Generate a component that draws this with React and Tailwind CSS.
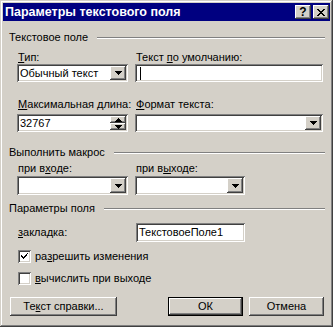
import React from 'react';

const raised =
  'bg-[#d4d0c8] shadow-[inset_-1px_-1px_#404040,inset_1px_1px_#fff,inset_-2px_-2px_#808080,inset_2px_2px_#d4d0c8]';
const sunken =
  'bg-white shadow-[inset_1px_1px_#808080,inset_-1px_-1px_#fff,inset_2px_2px_#404040,inset_-2px_-2px_#d4d0c8]';

const Arrow = ({ up }) => (
  <svg width="7" height="4" viewBox="0 0 7 4" className={up ? 'rotate-180' : ''}>
    <path d="M0 0h7v1H0zM1 1h5v1H1zM2 2h3v1H2zM3 3h1v1H3z" fill="#000" />
  </svg>
);

const GroupHeading = ({ children, className = '' }) => (
  <div className={`flex items-center h-[13px] ${className}`}>
    <span>{children}</span>
    <div className="flex-1 ml-[9px] h-0 border-t border-b border-t-[#808080] border-b-white" />
  </div>
);

const Select = ({ value, className = '' }) => (
  <div className={`${sunken} flex items-stretch p-[2px] ${className}`}>
    <div className="flex-1 pl-[1px] flex items-center overflow-hidden whitespace-nowrap">{value}</div>
    <div className={`${raised} w-[16px] flex items-center justify-center`}>
      <Arrow />
    </div>
  </div>
);

const Checkbox = ({ checked, children, className = '' }) => (
  <div className={`flex items-center h-[13px] pl-[9px] ${className}`}>
    <div className={`${sunken} w-[13px] h-[13px] flex items-center justify-center`}>
      {checked && (
        <svg width="7" height="7" viewBox="0 0 7 7">
          <path d="M6 0h1v1h-1zM5 1h1v2H5zM4 2h1v2H4zM3 3h1v2H3zM2 4h1v2H2zM1 3h1v2H1zM0 2h1v2H0z" fill="#000" />
        </svg>
      )}
    </div>
    <span className="ml-[4px]">{children}</span>
  </div>
);

const Button = ({ children, isDefault, className = '' }) =>
  isDefault ? (
    <div className={`border border-black h-[19px] ${className}`}>
      <div className={`${raised} h-full flex items-center justify-center`}>{children}</div>
    </div>
  ) : (
    <div className={`${raised} h-[19px] flex items-center justify-center ${className}`}>{children}</div>
  );

export default function App() {
  return (
    <div className="w-[333px] h-[327px] p-[3px] flex flex-col bg-[#d4d0c8] shadow-[inset_-1px_-1px_#404040,inset_1px_1px_#d4d0c8,inset_-2px_-2px_#808080,inset_2px_2px_#fff] font-['Liberation_Sans',Arial,sans-serif] text-[11px] leading-[13px] text-black">
      {/* title bar */}
      <div className="h-[18px] bg-[#000080] flex items-center pl-[2px] pr-[1px]">
        <span className="flex-1 text-white font-bold text-[12.5px] whitespace-nowrap">Параметры текстового поля</span>
        <div className={`${raised} w-[16px] h-[14px] flex items-center justify-center font-bold text-[12px] leading-none`}>?</div>
        <div className={`${raised} w-[16px] h-[14px] ml-[2px] flex items-center justify-center`}>
          <svg width="8" height="7" viewBox="0 0 8 7">
            <path d="M0 0h2v1H0zM6 0h2v1H6zM1 1h2v1H1zM5 1h2v1H5zM2 2h4v1H2zM3 3h2v1H3zM2 4h4v1H2zM1 5h2v1H1zM5 5h2v1H5zM0 6h2v1H0zM6 6h2v1H6z" fill="#000" />
          </svg>
        </div>
      </div>

      <div className="pl-[6px] pr-[5px] flex flex-col">
        <GroupHeading className="mt-[10px]">Текстовое поле</GroupHeading>

        <div className="grid grid-cols-[111px_188px] gap-x-[7px] pl-[8px]">
          <div className="mt-[7px] h-[13px] pl-[1px]"><u>Т</u>ип:</div>
          <div className="mt-[7px] h-[13px] pl-[1px]">Текст <u>п</u>о умолчанию:</div>
          <Select value="Обычный текст" className="h-[18px]" />
          <div className={`${sunken} h-[18px] flex items-center pl-[5px]`}>
            <div className="w-[1px] h-[13px] bg-black" />
          </div>

          <div className="mt-[16px] h-[13px] pl-[1px] whitespace-nowrap"><u>М</u>аксимальная длина:</div>
          <div className="mt-[16px] h-[13px] pl-[1px]"><u>Ф</u>ормат текста:</div>
          <div className={`${sunken} mt-[3px] h-[18px] flex items-stretch p-[2px]`}>
            <div className="flex-1 pl-[1px] flex items-center">32767</div>
            <div className="w-[16px] flex flex-col">
              <div className={`${raised} flex-1 flex items-center justify-center`}>
                <Arrow up />
              </div>
              <div className={`${raised} flex-1 flex items-center justify-center`}>
                <Arrow />
              </div>
            </div>
          </div>
          <Select value="" className="mt-[3px] h-[18px]" />
        </div>

        <GroupHeading className="mt-[14px]">Выполнить макрос</GroupHeading>

        <div className="grid grid-cols-[111px_110px] gap-x-[7px] pl-[8px]">
          <div className="mt-[3px] h-[13px] pl-[1px]">при в<u>х</u>оде:</div>
          <div className="mt-[3px] h-[13px] pl-[1px]">при в<u>ы</u>ходе:</div>
          <Select value="" className="mt-[1px] h-[19px]" />
          <Select value="" className="mt-[1px] h-[19px]" />
        </div>

        <GroupHeading className="mt-[7px]">Параметры поля</GroupHeading>

        <div className="grid grid-cols-[112px_109px] gap-x-[7px] pl-[8px] mt-[8px]">
          <div className="h-[19px] flex items-center pl-[1px]"><u>з</u>акладка:</div>
          <div className={`${sunken} h-[19px] flex items-center pl-[3px]`}>ТекстовоеПоле1</div>
        </div>

        <Checkbox checked className="mt-[8px]">ра<u>з</u>решить изменения</Checkbox>
        <Checkbox className="mt-[9px]"><u>в</u>ычислить при выходе</Checkbox>

        <div className="mt-[12px] flex items-center pl-[1px] pr-[1px]">
          <Button className="w-[107px]">Те<u>к</u>ст справки...</Button>
          <div className="flex-1" />
          <Button isDefault className="w-[75px]">ОК</Button>
          <Button className="w-[75px] ml-[6px]">Отмена</Button>
        </div>
      </div>
    </div>
  );
}
